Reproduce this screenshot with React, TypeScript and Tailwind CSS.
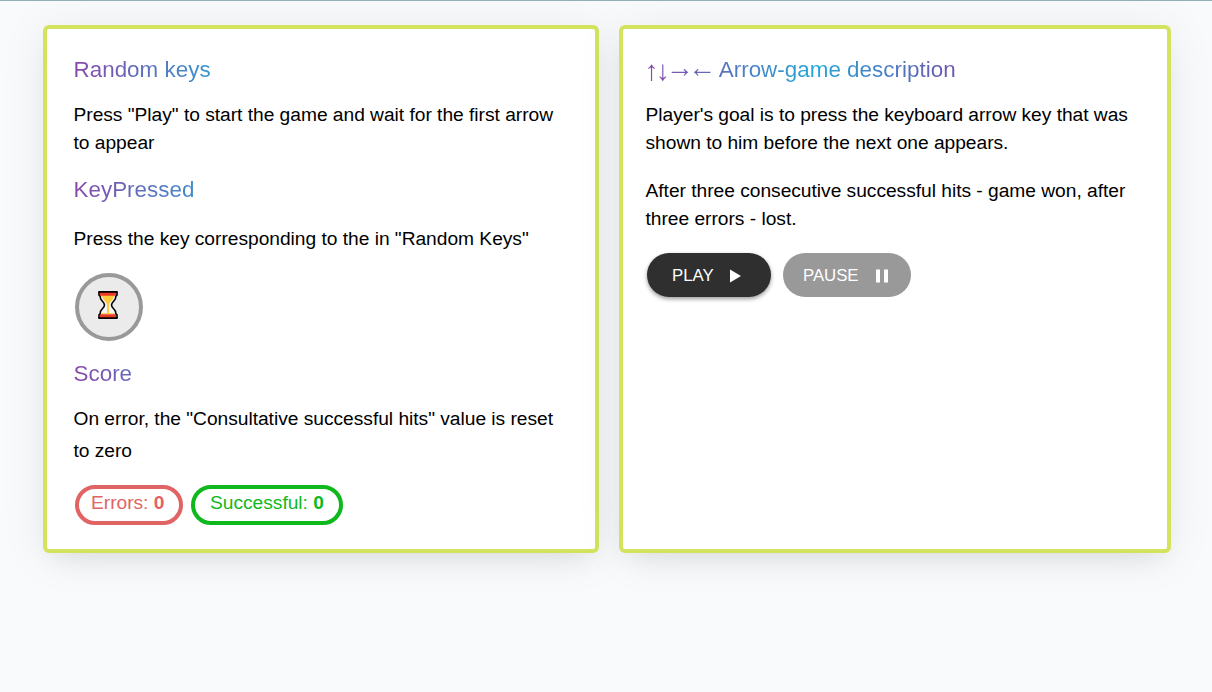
import type { ReactNode } from "react";

function Heading({ children }: { children: ReactNode }) {
  return (
    <h2 className="h-8 bg-[linear-gradient(90deg,#8848aa_0%,#22a6d8_34%,#7c46a6_67%,#7c46a6_100%)] bg-clip-text text-[22.4px] leading-8 tracking-[0.02px] text-transparent">
      {children}
    </h2>
  );
}

function Hourglass() {
  return (
    <svg width="20" height="28" viewBox="0 0 20 28" fill="none">
      <path d="M2.500 3v3.500c0 3 4 4.500 4 7.500s-4 4.500-4 7.500V25h15v-3.500c0-3-4-4.500-4-7.500s4-4.500 4-7.500V3z" fill="#f4f4f4" />
      <path d="M4 4h12c0 5-4.500 6.500-5 9.500V23H9v-9.500C8.500 10.500 4 9 4 4z" fill="#fcca3d" />
      <path d="M4 22.700h12" stroke="#fcca3d" strokeWidth="1" />
      <path d="M2.300 4.500v2c0 3 4.200 4.500 4.200 7.500s-4.200 4.500-4.200 7.500v2M17.700 4.500v2c0 3-4.200 4.500-4.200 7.500s4.200 4.500 4.200 7.500v2" stroke="#000" strokeWidth="1.600" />
      <path d="M1 1h18M1 27h18" stroke="#000" strokeWidth="1.800" strokeLinecap="round" />
      <path d="M1 1v3l1.300 1M19 1v3l-1.300 1M1 27v-3l1.300-1M19 27v-3l-1.300-1" stroke="#000" strokeWidth="1.600" />
      <path d="M2 1.800h16v3H2zM2 23.200h16v3H2z" fill="#ea3a24" />
    </svg>
  );
}

const card =
  "h-[528px] rounded-md border-4 border-[#d4e35e] bg-white shadow-[0_4px_48px_rgba(0,0,0,0.07),0_14px_24px_-10px_rgba(0,0,0,0.08)]";

export default function App() {
  return (
    <main className="h-[692px] overflow-hidden border-t border-[#91b0b5] bg-[#f8fafc] pt-6 pl-[43px] font-['Liberation_Sans',Arial,sans-serif] text-[19.2px] leading-7 tracking-[-0.02px] text-black">
      <div className="flex gap-5">
        <section className={`${card} w-[556px] pt-[25px] pr-6 pl-[26.5px]`}>
          <Heading>Random keys</Heading>
          <p className="mt-[15px]">Press "Play" to start the game and wait for the first arrow to appear</p>
          <div className="mt-[17px]">
            <Heading>KeyPressed</Heading>
          </div>
          <p className="mt-[19px]">Press the key corresponding to the in "Random Keys"</p>
          <div className="mt-5 ml-[1.5px] flex size-[68px] items-center justify-center rounded-full border-4 border-[#999] bg-[#ebebeb] pr-[3px] pb-1">
            <Hourglass />
          </div>
          <div className="mt-[17px]">
            <Heading>Score</Heading>
          </div>
          <p className="mt-[13px] leading-8">
            On error, the "Consultative successful hits" value is reset to zero
          </p>
          <div className="mt-[18px] ml-[1.5px] flex gap-2">
            <div className="h-10 w-[108px] rounded-[20px] border-4 border-[#e06464] pl-3 text-[#e06464]">
              Errors: <b>0</b>
            </div>
            <div className="h-10 w-[152px] rounded-[20px] border-4 border-[#0fb91d] pl-[15px] text-[#0fb91d]">
              Successful: <b>0</b>
            </div>
          </div>
        </section>

        <section className={`${card} w-[552px] px-[22.500px] pt-[25px]`}>
          <Heading>
            <span className="-ml-[0.8px] align-[-3px] text-[28px] leading-none tracking-[-2.8px]">↑↓</span>
            <span className="-ml-[1.4px] mr-[3.2px] align-[0px] text-[28px] leading-none tracking-[-5.600px]">→←</span>
            {" Arrow-game description"}
          </Heading>
          <p className="mt-[15px]">
            Player's goal is to press the keyboard arrow key that was shown to him before the next one appears.
          </p>
          <p className="mt-5">
            After three consecutive successful hits - game won, after three errors - lost.
          </p>
          <div className="mt-5 ml-[1.5px] flex gap-3 text-[16.8px] leading-6 text-white">
            <button className="flex h-11 w-[124px] items-center rounded-full bg-[#2f2f2f] pl-[25px] shadow-[0_2px_4px_rgba(0,0,0,0.4)]">
              <span className="pt-0.5">PLAY</span>
              <svg className="mt-0.5 ml-4" width="11" height="14" viewBox="0 0 11 14" fill="currentColor">
                <path d="M0 .5v13L11 7z" />
              </svg>
            </button>
            <button className="flex h-11 w-32 items-center rounded-full bg-[#999] pl-5">
              <span className="pt-0.5">PAUSE</span>
              <svg className="mt-0.5 ml-[17px]" width="12" height="14" viewBox="0 0 12 14" fill="currentColor">
                <path d="M0 .5h4v13H0zM8 .5h4v13H8z" />
              </svg>
            </button>
          </div>
        </section>
      </div>
    </main>
  );
}
